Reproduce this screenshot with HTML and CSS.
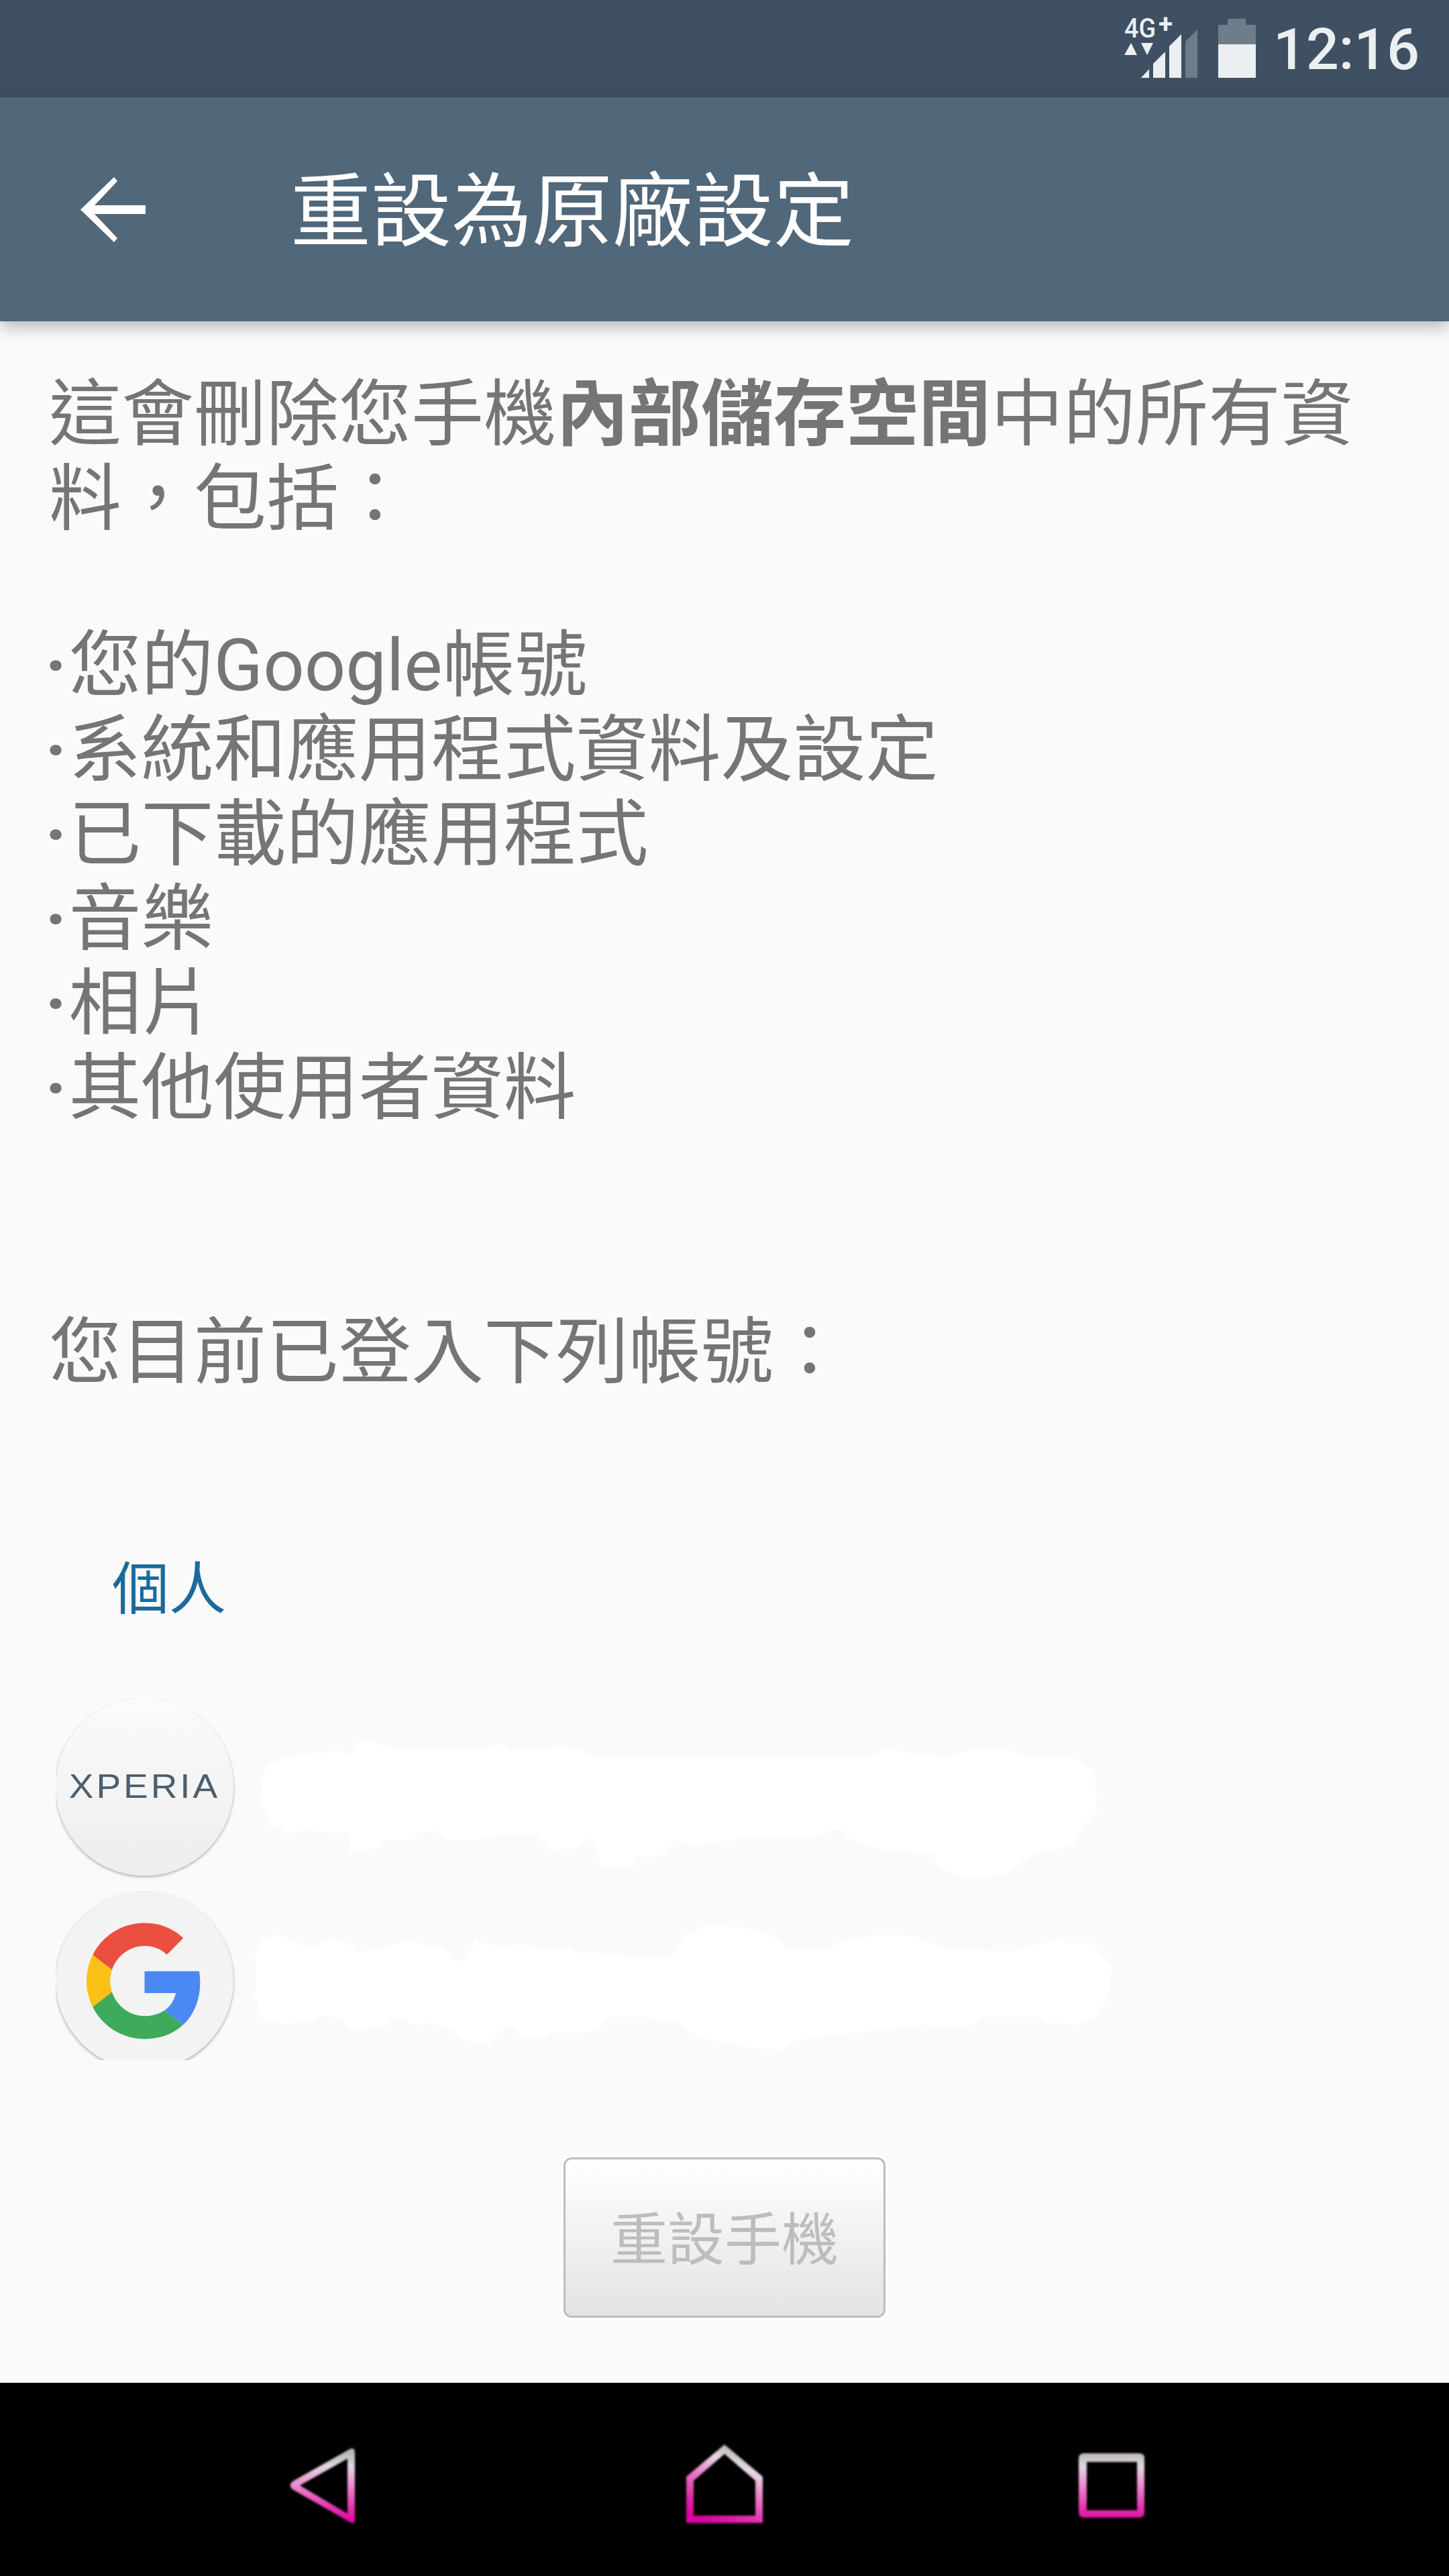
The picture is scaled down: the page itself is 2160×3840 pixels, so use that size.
FILE: index.html
```html
<!DOCTYPE html>
<html lang="zh-TW">
<head>
    <meta name="viewport" content="width=device-width, initial-scale=1.0">
    <title>重設為原廠設定</title>
    <link rel="stylesheet" href="styles.css">
</head>
<body>
    <div class="status-bar">
        <svg class="signal-icon" width="112" height="112" viewBox="0 -20 112 112">
            <text class="net-label" x="0" y="30" textLength="47" lengthAdjust="spacingAndGlyphs">4G</text>
            <text class="net-plus" x="51" y="23" textLength="21" lengthAdjust="spacingAndGlyphs">+</text>
            <polygon class="sig-on" points="0,56 10,38 19,56"/>
            <polygon class="sig-on" points="25,38 43,38 34,56"/>
            <polygon class="sig-on" points="25,90 37,77 37,90"/>
            <polygon class="sig-on" points="43,90 43,69 61,51 61,90"/>
            <polygon class="sig-on" points="67,90 67,43 85,25 85,90"/>
            <polygon class="sig-off" points="91,90 91,36 109,18 109,90"/>
        </svg>
        <svg class="battery-icon" width="56" height="88" viewBox="0 0 56 88">
            <polygon class="sig-off" points="14,0 41,0 41,9 56,9 56,38 0,38 0,9 14,9"/>
            <rect class="sig-on" x="0" y="38" width="56" height="50"/>
        </svg>
        <span class="clock">12:16</span>
    </div>

    <div class="toolbar">
        <svg class="back-arrow" width="97" height="97" viewBox="0 0 97 97">
            <polygon points="50,0 55,6 21,42 97,42 97,55 21,55 55,91 50,97 0,48.5"/>
        </svg>
        <h1 class="toolbar-title">重設為原廠設定</h1>
    </div>

    <div class="main">
        <p class="intro">這會刪除您手機<b>內部儲存空間</b>中的所有資料，包括：</p>
        <ul class="erase-list">
            <li><span class="dot">·</span>您的Google帳號</li>
            <li><span class="dot">·</span>系統和應用程式資料及設定</li>
            <li><span class="dot">·</span>已下載的應用程式</li>
            <li><span class="dot">·</span>音樂</li>
            <li><span class="dot">·</span>相片</li>
            <li><span class="dot">·</span>其他使用者資料</li>
        </ul>
        <p class="signed-in">您目前已登入下列帳號：</p>
        <div class="section-label">個人</div>
        <div class="accounts">
            <div class="account-row">
                <div class="avatar avatar-xperia"><span class="xperia-name">XPERIA</span></div>
                <svg class="blot blot-one" width="1258" height="210" viewBox="50 240 1450 550" preserveAspectRatio="none">
                    <polygon points="60,470 70,345 110,310 175,295 185,290 215,310 230,248 290,285 425,290 470,265 480,290 540,290 565,268 600,285 620,315 1105,315 1135,282 1165,300 1240,315 1275,285 1330,285 1380,318 1430,320 1450,315 1485,370 1490,520 1470,570 1450,650 1380,690 1330,770 1270,780 1225,740 1215,685 1130,670 1065,620 1060,592 1035,592 1000,625 880,625 840,640 800,655 770,625 740,700 700,690 695,730 648,740 625,610 600,660 555,672 545,635 525,615 470,608 430,630 380,630 360,595 320,605 315,630 265,630 260,660 213,680 213,605 170,600 135,590 105,605 75,570"/>
                </svg>
            </div>
            <div class="account-row">
                <div class="avatar avatar-google">
                    <svg width="173" height="176" viewBox="0 0 48 48">
                        <path fill="#eb4f3f" d="M24 9.5c3.54 0 6.71 1.22 9.21 3.6l6.85-6.85C35.9 2.38 30.47 0 24 0 14.62 0 6.51 5.38 2.56 13.22l7.98 6.19C12.43 13.72 17.74 9.5 24 9.5z"/>
                        <path fill="#4a89f3" d="M46.98 24.55c0-1.57-.15-3.09-.38-4.55H24v9.02h12.94c-.58 2.96-2.26 5.48-4.78 7.18l7.73 6c4.51-4.18 7.09-10.36 7.09-17.65z"/>
                        <path fill="#fbc016" d="M10.53 28.59c-.48-1.45-.76-2.99-.76-4.59s.27-3.14.76-4.59l-7.98-6.19C.92 16.46 0 20.12 0 24c0 3.88.92 7.54 2.56 10.78l7.97-6.19z"/>
                        <path fill="#3dab5b" d="M24 48c6.48 0 11.93-2.13 15.89-5.81l-7.73-6c-2.15 1.45-4.92 2.3-8.16 2.3-6.26 0-11.57-4.22-13.47-9.91l-7.98 6.19C6.51 42.62 14.62 48 24 48z"/>
                    </svg>
                </div>
                <svg class="blot blot-two" width="1292" height="191" viewBox="40 960 1490 500" preserveAspectRatio="none">
                    <polygon points="50,1100 60,1025 85,1010 130,1055 150,1055 180,1025 210,1050 220,1080 265,1060 300,1033 365,1060 385,1110 410,1110 428,1035 470,1060 500,1045 535,1068 590,1058 590,1080 670,1082 680,1092 765,1092 790,1010 825,970 880,980 920,1000 945,1030 955,1065 1025,1070 1060,1030 1115,1010 1180,1015 1225,1060 1340,1075 1390,1050 1432,1025 1440,1045 1485,1042 1490,1070 1515,1130 1510,1240 1490,1320 1460,1350 1410,1345 1395,1320 1295,1320 1270,1365 1210,1365 1200,1350 1150,1365 1090,1380 975,1410 950,1450 900,1440 810,1400 790,1370 770,1335 735,1335 720,1320 650,1320 630,1375 600,1385 550,1385 545,1400 505,1402 495,1360 470,1365 445,1430 405,1410 385,1370 350,1345 320,1355 295,1320 260,1360 215,1370 195,1330 150,1310 150,1335 100,1350 60,1330 50,1240"/>
                </svg>
            </div>
        </div>
        <div class="button-row">
            <button class="reset-button" disabled>重設手機</button>
        </div>
    </div>

    <div class="nav-bar">
        <svg class="nav-back" width="97" height="130" viewBox="0 0 97 130">
            <defs>
                <linearGradient id="navGlow" gradientUnits="userSpaceOnUse" x1="0" y1="15" x2="0" y2="122">
                    <stop offset="0" stop-color="#b6b4b6"/>
                    <stop offset="0.2" stop-color="#e2d8df"/>
                    <stop offset="0.45" stop-color="#ec8fd2"/>
                    <stop offset="0.8" stop-color="#e42cab"/>
                    <stop offset="1" stop-color="#dc00a2"/>
                </linearGradient>
                <linearGradient id="homeGlow" gradientUnits="userSpaceOnUse" x1="85" y1="10" x2="40" y2="122">
                    <stop offset="0" stop-color="#b0aeb0"/>
                    <stop offset="0.22" stop-color="#e6dae3"/>
                    <stop offset="0.45" stop-color="#e88acb"/>
                    <stop offset="0.8" stop-color="#de2aa8"/>
                    <stop offset="1" stop-color="#dc00a2"/>
                </linearGradient>
            </defs>
            <path fill="url(#navGlow)" fill-rule="evenodd" d="M89 11Q96 7 97 15V116Q97 124 90 120L4 71Q-3 65 4 59ZM86 25L15 65L86 107Z"/>
        </svg>
        <svg class="nav-home" width="114" height="130" viewBox="0 0 114 130">
            <path fill="url(#homeGlow)" fill-rule="evenodd" d="M57 4L114 52V121H0V52ZM57 18L11 58V110H103V58Z"/>
        </svg>
        <svg class="nav-recent" width="98" height="130" viewBox="0 0 98 130">
            <path fill="url(#navGlow)" fill-rule="evenodd" d="M8 17H90Q98 17 98 25V105Q98 113 90 113H8Q0 113 0 105V25Q0 17 8 17ZM12 30V102H87V30Z"/>
        </svg>
    </div>
</body>
</html>
```
FILE: styles.css
```css
html, body {
    margin: 0;
    height: 100%;
}

body {
    display: flex;
    flex-direction: column;
    height: 3840px;
    overflow: hidden;
    background-color: #fafafa;
    font-family: Roboto, "Noto Sans CJK TC", sans-serif;
}

.status-bar {
    height: 145px;
    flex-shrink: 0;
    display: flex;
    align-items: flex-start;
    box-sizing: border-box;
    padding-left: 1676px;
    background-color: #3e5061;
    color: #eceff1;
}

.signal-icon {
    margin-top: 6px;
}

.battery-icon {
    margin-top: 28px;
    margin-left: 28px;
}

.net-label {
    font-family: Roboto, sans-serif;
    font-size: 40px;
    font-weight: 500;
    fill: #eceff1;
}

.net-plus {
    font-family: Roboto, sans-serif;
    font-size: 38px;
    font-weight: 700;
    fill: #eceff1;
}

.sig-on {
    fill: #eceff1;
}

.sig-off {
    fill: #6f7d8a;
}

.clock {
    margin-left: 26px;
    margin-top: 24px;
    font-size: 86px;
    font-weight: 500;
    line-height: 100px;
}

.toolbar {
    height: 334px;
    flex-shrink: 0;
    display: flex;
    align-items: center;
    box-sizing: border-box;
    padding-left: 120px;
    background-color: #51677a;
    box-shadow: 0 8px 24px rgba(0, 0, 0, 0.28);
    position: relative;
}

.back-arrow {
    fill: #fff;
    flex-shrink: 0;
}

.toolbar-title {
    margin: 10px 0 0 216px;
    font-size: 120px;
    font-weight: 400;
    line-height: 140px;
    color: #fff;
}

.main {
    flex: 1;
    padding: 76px 73px 0;
    color: #757575;
    font-size: 108px;
    line-height: 126px;
}

.intro {
    margin: 0 0 122px;
}

.erase-list {
    margin: 0;
    padding: 0;
    list-style: none;
}

.dot {
    font-weight: 700;
    margin: 0 3px 0 -6px;
}

.signed-in {
    margin: 268px 0 0;
}

.section-label {
    margin: 241px 0 0 94px;
    font-size: 85px;
    line-height: 100px;
    color: #1b6a9c;
}

.accounts {
    margin: 111px 0 0 10px;
    height: 540px;
    overflow: hidden;
    display: flex;
    flex-direction: column;
    gap: 24px;
}

.account-row {
    height: 265px;
    flex-shrink: 0;
    display: flex;
    align-items: flex-start;
}

.avatar {
    width: 265px;
    height: 265px;
    flex-shrink: 0;
    box-sizing: border-box;
    border-radius: 50%;
    display: flex;
    align-items: center;
    justify-content: center;
    box-shadow: 0 2px 4px rgba(0, 0, 0, 0.32);
}

.avatar-xperia {
    background: linear-gradient(#fbfbfb, #ededed);
}

.avatar-google {
    background-color: #f3f3f3;
}

.xperia-name {
    font-family: "Liberation Sans", sans-serif;
    font-size: 50px;
    letter-spacing: 3.6px;
    line-height: 60px;
    margin-top: -2px;
    transform: scaleX(1.1);
    color: #4a5f70;
}

.blot {
    fill: #fff;
    stroke: #fff;
    stroke-width: 8;
    stroke-linejoin: round;
    flex-shrink: 0;
}

.blot-one {
    margin: 61px 0 0 35px;
}

.blot-two {
    margin: 47px 0 0 27px;
}

.button-row {
    margin-top: 145px;
    display: flex;
    justify-content: center;
}

.reset-button {
    width: 480px;
    height: 239px;
    padding: 0 0 8px;
    box-sizing: border-box;
    border: 3px solid #bdbdbd;
    border-radius: 12px;
    background: linear-gradient(#ffffff, #e3e3e3);
    box-shadow: 0 0 0 3px #fff;
    font-family: Roboto, "Noto Sans CJK TC", sans-serif;
    font-size: 85px;
    color: #bdbdbd;
}

.nav-bar {
    height: 288px;
    flex-shrink: 0;
    box-sizing: border-box;
    padding: 88px 0 0 432px;
    display: flex;
    align-items: flex-start;
    background-color: #000;
}

.nav-bar svg {
    filter: blur(1.5px);
}

.nav-home {
    margin-left: 494px;
}

.nav-recent {
    margin-left: 471px;
}
```
